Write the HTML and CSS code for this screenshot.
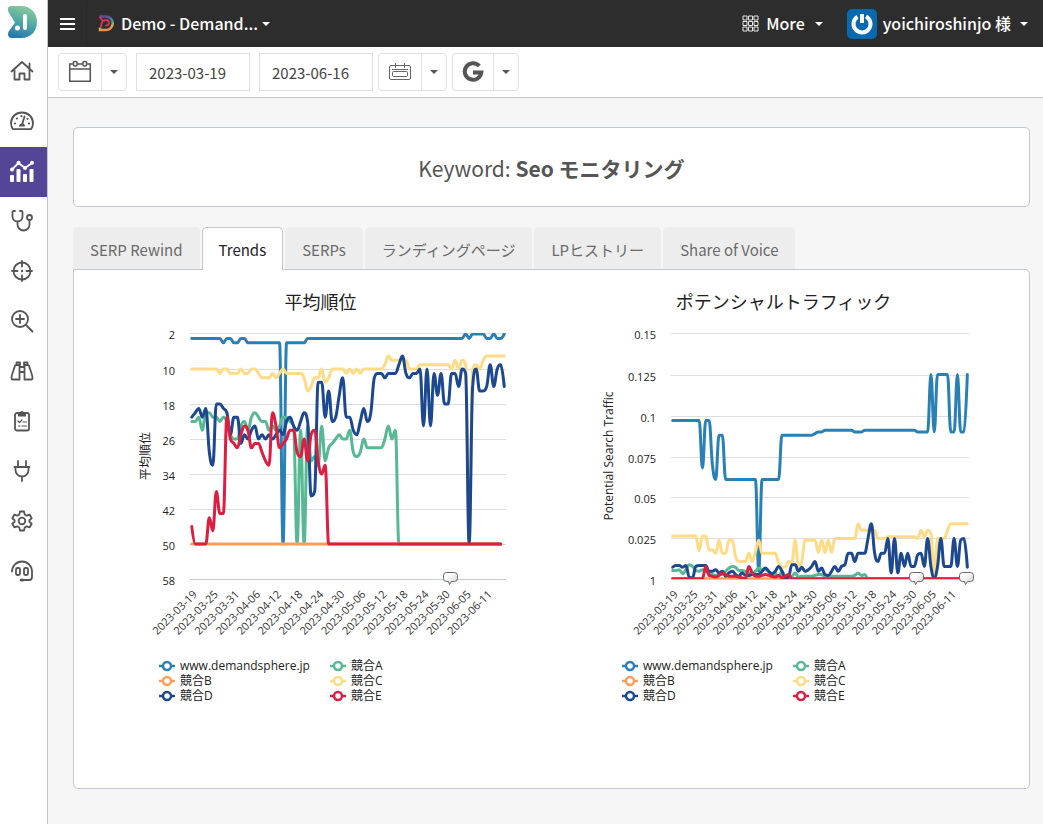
FILE: index.html
```html
<!DOCTYPE html>
<html lang="ja">

<head>
	<title>Keyword: Seo モニタリング</title>
	<meta charset="UTF-8">
	<meta name="viewport" content="width=device-width, initial-scale=1.0">
	<link rel="stylesheet" href="styles.css">
</head>

<body>
	<nav class="sidebar">
		<a href="#" class="side-logo" aria-label="DemandSphere">
			<svg width="30" height="33" viewBox="0 0 30 33">
				<defs>
					<linearGradient id="logo-fill" x1="0.6" y1="0" x2="0.3" y2="1">
						<stop offset="0" stop-color="#8bcb9b" />
						<stop offset="0.5" stop-color="#4fa8a4" />
						<stop offset="1" stop-color="#2577b0" />
					</linearGradient>
				</defs>
				<path fill="url(#logo-fill)" d="M3 0h10c10 0 16 7 16 16s-6 16-16 16H4c-4 0-5-4-3-7l5-7c1-1 1-2 0-3L1 7C-1 3 0 0 3 0z" />
				<rect x="15" y="8" width="4" height="16" rx="2" fill="#fff" />
				<circle cx="9.500" cy="22" r="2.500" fill="#fff" />
			</svg>
		</a>
		<a href="#" class="side-item" aria-label="Home">
			<svg width="24" height="24" viewBox="0 0 24 24"><path d="M1.500 12.500L12 3l10.500 9.500M4.500 11v9.500h5v-6h5v6h5V11M19.500 9V4.500" /></svg>
		</a>
		<a href="#" class="side-item" aria-label="Dashboard">
			<svg width="24" height="24" viewBox="0 0 24 24">
				<path d="M3 20.200C1.800 18.500 1 16.500 1 14.200 1 8 5.900 3.500 12 3.500S23 8 23 14.200c0 2.300-.8 4.300-2 6z" />
				<path d="M12 16l2.500-8.500" />
				<path class="solid" d="M9 17.500a3 3 0 0 1 6 0z" />
				<g class="solid"><circle cx="5" cy="14.500" r="1.100" /><circle cx="7" cy="9.500" r="1.100" /><circle cx="11.500" cy="7.200" r="1.100" /><circle cx="17.500" cy="9.800" r="1.100" /><circle cx="19" cy="14.500" r="1.100" /></g>
			</svg>
		</a>
		<a href="#" class="side-item active" aria-label="Analytics">
			<svg width="26" height="24" viewBox="0 0 26 24">
				<path d="M3 10.500L9.500 4l6.500 5 7-5" />
				<g class="solid"><circle cx="3" cy="10.500" r="2" /><circle cx="9.500" cy="3.800" r="2" /><circle cx="16" cy="9" r="2" /><circle cx="23" cy="3.800" r="2" />
				<rect x="1" y="16" width="4" height="7" rx="1" /><rect x="7.500" y="10" width="4" height="13" rx="1" /><rect x="14" y="15" width="4" height="8" rx="1" /><rect x="20.500" y="10" width="4" height="13" rx="1" /></g>
			</svg>
		</a>
		<a href="#" class="side-item" aria-label="Health check">
			<svg width="24" height="24" viewBox="0 0 24 24"><path d="M5 2H3.500a1 1 0 0 0-1 1v4.500a5 5 0 0 0 10 0V3a1 1 0 0 0-1-1H10M7.500 12.500v3a6 6 0 0 0 12 0V11" /><circle cx="19.500" cy="8.500" r="2.500" /></svg>
		</a>
		<a href="#" class="side-item" aria-label="Target">
			<svg width="24" height="24" viewBox="0 0 24 24"><circle cx="12" cy="12" r="8.500" /><path d="M12 2v5.500M12 16.500V22M2 12h5.500M16.500 12H22" /><circle class="solid" cx="12" cy="12" r="1.200" /></svg>
		</a>
		<a href="#" class="side-item" aria-label="Keyword search">
			<svg width="24" height="24" viewBox="0 0 24 24"><circle cx="10" cy="10" r="8" /><path d="M16 16l6.500 6.500M10 6v8M6 10h8" /></svg>
		</a>
		<a href="#" class="side-item" aria-label="Discover">
			<svg width="24" height="24" viewBox="0 0 24 24"><path d="M6 6H9.500v14.500h-7c-1 0-1-1-1-2C2 14 4 11 5 6.500zM18 6h-3.500v14.500h7c1 0 1-1 1-2-.5-4.500-2.500-7.500-3.500-12zM6.500 6V3.500H10V6M17.500 6V3.500H14V6M9.500 8h5M9.500 13h5" /></svg>
		</a>
		<a href="#" class="side-item" aria-label="Reports">
			<svg width="24" height="24" viewBox="0 0 24 24"><rect x="5" y="4" width="14" height="17.500" rx="2" /><path class="solid" d="M8 7.500V4h2a2 2 0 0 1 4 0h2v3.500z" /><path class="thin" d="M8 12l1.500 1.500L12 11M13 13h3.500M8.500 17h1.500M12 17h4.500" /></svg>
		</a>
		<a href="#" class="side-item" aria-label="Integrations">
			<svg width="24" height="24" viewBox="0 0 24 24"><path d="M8 2v5M16 2v5M4.500 8h15M5.500 8v3a6.500 6.500 0 0 0 13 0V8M12 17.500V22" /></svg>
		</a>
		<a href="#" class="side-item" aria-label="Settings">
			<svg width="24" height="24" viewBox="0 0 24 24"><path d="M10 2.500h4l.7 3 2 1.200 3-1 2 3.500-2.300 2v1.600l2.300 2-2 3.500-3-1-2 1.200-.7 3h-4l-.7-3-2-1.200-3 1-2-3.500 2.300-2v-1.600l-2.300-2 2-3.500 3 1 2-1.200z" /><circle cx="12" cy="12" r="3.300" /></svg>
		</a>
		<a href="#" class="side-item" aria-label="Support">
			<svg width="24" height="24" viewBox="0 0 24 24"><path d="M2 12.500a10 10 0 0 1 20 0V18a3 3 0 0 1-3 3h-7" /><rect x="6" y="9" width="4" height="7" rx="1.500" /><rect x="14" y="9" width="4" height="7" rx="1.500" /><ellipse class="solid" cx="12" cy="21" rx="2.500" ry="1.500" /></svg>
		</a>
	</nav>

	<div class="page">
		<header class="topbar">
			<button type="button" class="menu-btn" aria-label="Menu">
				<svg width="15" height="12" viewBox="0 0 15 12"><path d="M0 1h15M0 6h15M0 11h15" stroke="#fff" stroke-width="2" /></svg>
			</button>
			<button type="button" class="top-btn site-btn">
				<svg width="16" height="17" viewBox="0 0 16 17" fill="none">
					<defs>
						<linearGradient id="site-fill" x1="0.300" y1="0" x2="0.500" y2="1">
							<stop offset="0" stop-color="#5a4a9a" />
							<stop offset="0.450" stop-color="#3f9e9e" />
							<stop offset="0.750" stop-color="#c9b45c" />
							<stop offset="1" stop-color="#f08a4b" />
						</linearGradient>
					</defs>
					<path d="M1.500 1.500H8a6.500 6.500 0 0 1 0 13.500H2l0-2.500" stroke="url(#site-fill)" stroke-width="2.500" />
					<path d="M1.500 1.500l4 5.500M3 12c0-4 2-7 5-7 2 0 3 1.500 3 3 0 2-2 3-3.500 2" stroke="#d9314f" stroke-width="2" />
				</svg>
				<span>Demo - Demand...</span>
				<i class="caret"></i>
			</button>
			<button type="button" class="top-btn more-btn">
				<svg width="17" height="17" viewBox="0 0 17 17" fill="none" stroke="#e8e8e8"><path d="M1 1h4v4H1zM6.500 1h4v4h-4zM12 1h4v4h-4zM1 6.500h4v4H1zM6.500 6.500h4v4h-4zM12 6.500h4v4h-4zM1 12h4v4H1zM6.500 12h4v4h-4zM12 12h4v4h-4z" /></svg>
				<span>More</span>
				<i class="caret"></i>
			</button>
			<button type="button" class="top-btn user-btn">
				<svg width="30" height="30" viewBox="0 0 30 30"><rect width="30" height="30" rx="5" fill="#0769b0" /><path d="M10.500 7.800A8.500 8.500 0 1 0 19 7.500M15 5v9" fill="none" stroke="#fff" stroke-width="4" /></svg>
				<span>yoichiroshinjo 様</span>
				<i class="caret"></i>
			</button>
		</header>

		<div class="toolbar">
			<div class="btn-group">
				<button type="button" class="btn-main" aria-label="Calendar">
					<svg width="24" height="24" viewBox="0 0 24 24" fill="none" stroke="#555" stroke-width="1.500"><path d="M5.500 4H1.700v17.300h20.600V4h-3.800M9 4h6M1.700 9h20.600" /><rect x="5.500" y="1.500" width="3.500" height="4.500" rx="1" /><rect x="15" y="1.500" width="3.500" height="4.500" rx="1" /></svg>
				</button>
				<button type="button" class="btn-caret" aria-label="Period"><i class="caret"></i></button>
			</div>
			<input type="text" class="date-input date-from" aria-label="From" value="2023-03-19">
			<input type="text" class="date-input" aria-label="To" value="2023-06-16">
			<div class="btn-group">
				<button type="button" class="btn-main" aria-label="Compare">
					<svg width="24" height="20" viewBox="0 0 24 20" fill="none" stroke="#666"><rect x="1.500" y="3.500" width="21" height="14" rx="1.500" /><rect x="4.500" y="9.500" width="15" height="5" rx="1" /><path d="M4 7.500h16M7.500 1v5M16.500 1v5" /></svg>
				</button>
				<button type="button" class="btn-caret" aria-label="Compare period"><i class="caret"></i></button>
			</div>
			<div class="btn-group">
				<button type="button" class="btn-main btn-engine" aria-label="Google">
					<svg width="22" height="22" viewBox="0 0 22 22" fill="none" stroke="#555" stroke-width="4"><path d="M17.300 5A8.300 8.300 0 1 0 19.300 11.500H11" /></svg>
				</button>
				<button type="button" class="btn-caret" aria-label="Search engine"><i class="caret"></i></button>
			</div>
		</div>

		<main class="content">
			<h1 class="keyword-box">Keyword: <b>Seo モニタリング</b></h1>

			<nav class="tabs">
				<a href="#" class="tab">SERP Rewind</a>
				<a href="#" class="tab active">Trends</a>
				<a href="#" class="tab">SERPs</a>
				<a href="#" class="tab">ランディングページ</a>
				<a href="#" class="tab">LPヒストリー</a>
				<a href="#" class="tab">Share of Voice</a>
			</nav>

			<div class="panel">
				<section class="chart">
					<h2>平均順位</h2>
					<svg id="rank-chart" class="plot" viewBox="0 0 463 326"></svg>
					<ul class="legend"></ul>
				</section>
				<section class="chart">
					<h2>ポテンシャルトラフィック</h2>
					<svg id="traffic-chart" class="plot" viewBox="0 0 463 326"></svg>
					<ul class="legend"></ul>
				</section>
			</div>
		</main>
	</div>

	<script src="charts.js"></script>
</body>

</html>
```
FILE: styles.css
```css
* {
	box-sizing: border-box;
}

body {
	margin: 0;
	display: flex;
	min-height: 100vh;
	background-color: #f6f6f6;
	color: #555;
	font-family: "Noto Sans CJK JP", "Noto Sans", sans-serif;
	font-size: 16px;
	line-height: 24px;
}

a {
	color: inherit;
	text-decoration: none;
}

button {
	padding: 0;
	border: none;
	background: none;
	color: inherit;
	font: inherit;
	cursor: pointer;
}

svg {
	flex-shrink: 0;
}

.caret {
	border: 4px solid transparent;
	border-top-color: currentColor;
	border-bottom: none;
}

/* Sidebar */
.sidebar {
	flex: none;
	width: 48px;
	background-color: #fff;
	border-right: 1px solid #c3c8d0;
}

.side-logo,
.side-item {
	display: flex;
	align-items: center;
	justify-content: center;
	height: 50px;
}

.side-logo {
	height: 47px;
	padding-right: 2px;
	padding-bottom: 3px;
}

.side-item {
	padding-right: 3px;
	padding-bottom: 2px;
}

.side-item svg {
	fill: none;
	stroke: #555;
	stroke-width: 1.8;
	stroke-linecap: round;
	stroke-linejoin: round;
}

.side-item .solid {
	fill: #555;
	stroke: none;
}

.side-item .thin {
	stroke-width: 1.2;
}

.side-item.active {
	background-color: #554596;
}

.side-item.active svg {
	stroke: #fff;
}

.side-item.active .solid {
	fill: #fff;
}

.page {
	flex: 1;
	min-width: 0;
}

/* Top bar */
.topbar {
	display: flex;
	align-items: center;
	height: 47px;
	padding-right: 15px;
	background-color: #2d2d2d;
	color: #fff;
	font-weight: 500;
}

.menu-btn {
	display: flex;
	align-items: center;
	justify-content: center;
	width: 39px;
	height: 45px;
	border-right: 1px solid #282828;
}

.top-btn {
	display: flex;
	align-items: center;
	gap: 7px;
}

.top-btn span {
	padding-bottom: 2px;
}

.site-btn {
	margin-left: 11px;
}

.site-btn .caret {
	margin-left: -3px;
}

.more-btn {
	margin-left: auto;
}

.more-btn .caret,
.user-btn .caret {
	margin-left: 3px;
}

.user-btn {
	margin-left: 24px;
	gap: 6px;
}

/* Toolbar */
.toolbar {
	display: flex;
	align-items: center;
	gap: 5px;
	height: 51px;
	padding: 0 10px;
	background-color: #fff;
	border-bottom: 1px solid #c4c6ca;
}

.btn-group {
	display: flex;
	height: 38px;
	border: 1px solid #e1e1e1;
	border-radius: 4px;
}

.btn-main,
.btn-caret {
	display: flex;
	align-items: center;
	justify-content: center;
}

.btn-main {
	width: 42px;
}

.btn-engine {
	width: 40px;
}

.btn-caret {
	width: 25px;
	border-left: 1px solid #e1e1e1;
}

.date-input {
	width: 114px;
	height: 38px;
	padding: 0 12px;
	border: 1px solid #e1e1e1;
	background-color: #fff;
	color: #444;
	font-family: inherit;
	font-size: 15px;
}

.date-from {
	margin: 0 4px;
}

/* Content */
.content {
	padding: 29px 13px 35px 25px;
}

.keyword-box {
	margin: 0 0 20px;
	padding: 25px 24px 23px;
	background-color: #fff;
	border: 1px solid #c3c8d0;
	border-radius: 5px;
	font-size: 21px;
	font-weight: 400;
	line-height: 30px;
	text-align: center;
}

.tabs {
	display: flex;
	gap: 2px;
}

.tab {
	height: 42px;
	padding: 11px 17px 0;
	background-color: #ededed;
	border-radius: 5px 5px 0 0;
	color: #6a6a6a;
	font-size: 15px;
}

/* the open tab covers the panel's top border */
.tab.active {
	position: relative;
	z-index: 1;
	height: 43px;
	margin-bottom: -1px;
	padding: 10px 16px 0;
	border: 1px solid #c3c8d0;
	border-bottom: none;
	background-color: #fff;
	color: #222;
}

.panel {
	display: grid;
	grid-template-columns: 1fr 1fr;
	min-height: 520px;
	padding: 18px 14px 0 15px;
	background-color: #fff;
	border: 1px solid #c3c8d0;
	border-radius: 0 5px 5px 5px;
}

/* Charts */
.chart h2 {
	margin: 0 0 6px;
	color: #222;
	font-size: 18px;
	font-weight: 400;
	line-height: 26px;
	text-align: center;
}

.plot {
	display: block;
	width: 100%;
	font-family: "Open Sans", "Noto Sans CJK JP", sans-serif;
	font-size: 11px;
	fill: #222;
}

.plot .grid {
	stroke: #dedede;
}

.plot .axis {
	stroke: #c0cbe0;
}

.plot .date {
	fill: #333;
}

.plot .axis-title {
	font-size: 12px;
}

.plot .line {
	fill: none;
	stroke-width: 3;
	stroke-linecap: round;
	stroke-linejoin: round;
}

.plot .bubble {
	fill: url(#bubble-fill);
	stroke: #666;
}

.legend {
	display: grid;
	grid-template-columns: 171px 100px;
	margin: 12px 0 0;
	padding: 0 0 0 70px;
	list-style: none;
	color: #222;
	font-family: "Open Sans", "Noto Sans CJK JP", sans-serif;
	font-size: 12px;
	line-height: 15px;
}

.legend li {
	display: flex;
	align-items: center;
	gap: 5px;
	height: 15px;
}

.legend svg {
	fill: #fff;
	stroke-width: 2.5;
}
```
FILE: charts.js
```js
const series = [
	{ name: "www.demandsphere.jp", color: "#2980b5" },
	{ name: "競合A", color: "#57b894" },
	{ name: "競合B", color: "#fd9e5b" },
	{ name: "競合C", color: "#fedb85" },
	{ name: "競合D", color: "#1c4890" },
	{ name: "競合E", color: "#dc1e41" }
];

// values are "value" or "value*days", one per day from 2023-03-19
const rank = [
	"3*9 4 3*2 4*2 3*2 4*10 50 4*6 3*45 2 3 2*4 3*2 2 3*2 2",
	"22*2 21 24 20*2 21*2 22 21 22 25 26*2 23 22 24 21 20 21 22*2 24 23 24 23 21*2 22 23 50 24 50 23 31 30 32 23 31 28 27 26 25 26*2 24 29 30 29 26 28*5 26 23 26 24 50*30",
	"50*89",
	"10*8 11 10*2 11*3 10 11*2 10*2 11 12*3 11 12 11 10 11*5 12 15 14 12*2 10 13 12 10*4 11 10 11 10 11 10*6 9 7 8*5 10*3 9*9 10 8 10 8 9 50 10 9 10 8 7*6",
	"21 20 19 21 19 29 32 18*2 19 20 25 21*2 27 25 26 24 23 26 25 26 25 26 25 24 25 22 21 23 24 22 20 22 39 38 13*2 21 15 22 21 16 12 21*2 24 25 22 19 22 20 12 11*2 12 11*3 9 7 11 12 11*2 10 23 10 23 11 16 11 18*2 11*2 14 10 11 50 14 10 15*2 14 9 14 10 9 14",
	"46 50*4 44 47 38 43*2 21 26 27 28 25 23 24 28 27*2 29 31 32 20 23 28 27 26 24*2 29 30 26 31 25 24 31 34 32 50*50"
];

// thousandths
const traffic = [
	"97*9 68 97*2 70 61 88*2 61*10 5 61*6 88*10 89 90*2 91*9 90*3 91*16 90*4 125 90 125*4 90*2 125 90*2 125",
	"5.5*2 6 3.5 6 9 8 5.5 5 6 5 4 3 2.5 3*2 5 7 8 7.5 5.5*2 5 4*2 5 7 6*2 5 0.5 4 0.5 5 2*3 4 1.5 2*4 2.5 3*2 1.5 2*8 2.5 4 2.5 3 0.5*30",
	"0.5*89",
	"26.5*8 17.5 26.5*2 18*2 16 24 16*2 24*2 14 11*3 16 11 17 24 16*5 10 7.5*2 11 10 24 8 11 24*4 16.5 24 16.5 24 16.5 25*7 34 30*5 25*3 26*9 25 30 26 30 28 2 25*3 30 34*6",
	"7.5 8.5*2 7.5 8.5 1.5 1 8 8.5*3 5*2 6 4 5 2 4 5 3 2 4 2.5*2 3*3 5 7 5 3.5 5 8 5 1 1.5 9*2 5 7.5 5 6 8 11 5 7 3 2.5 5 8 5 8 9 16*2 11 16*3 25 34 16 11 16*2 25 4 25 4 16 8 16 8*2 15 16 8 25 8 1 8 25 8*3 25 8 24 25 7.5",
	"0.5*10 8 2.5 2 1.5 2.5 4 3 2*3 1.5 1 0.5 8 4 2*2 2.5 3 2.5 2 1.5 2.5 1 2 3 0.5*54"
];

function parseValues(text) {
	let values = [];
	text.split(" ").forEach(part => {
		let [value, days] = part.split("*");
		for (let i = 0; i < (days || 1); i++) {
			values.push(Number(value));
		}
	});
	return values;
}

// smooth line that never overshoots its own points
function spline(points) {
	let path = `M${points[0].x} ${points[0].y}`;
	let handle = points[0];

	for (let i = 1; i < points.length; i++) {
		let last = points[i - 1];
		let point = points[i];
		let next = points[i + 1];
		let left = point;
		let right = point;

		if (next) {
			left = { x: (1.5 * point.x + last.x) / 2.5, y: (1.5 * point.y + last.y) / 2.5 };
			right = { x: (1.5 * point.x + next.x) / 2.5, y: (1.5 * point.y + next.y) / 2.5 };
			let shift = (right.y - left.y) * (right.x - point.x) / (right.x - left.x) + point.y - right.y;
			left.y += shift;
			right.y += shift;

			let clamped = Math.max(Math.min(last.y, point.y), Math.min(Math.max(last.y, point.y), left.y));
			if (clamped !== left.y) {
				left.y = clamped;
				right.y = 2 * point.y - left.y;
			}
			clamped = Math.max(Math.min(next.y, point.y), Math.min(Math.max(next.y, point.y), right.y));
			if (clamped !== right.y) {
				right.y = clamped;
				left.y = 2 * point.y - right.y;
			}
		}

		path += ` C${[handle.x, handle.y, left.x, left.y, point.x, point.y].map(n => n.toFixed(2)).join(" ")}`;
		handle = right;
	}
	return path;
}

function drawChart(id, options) {
	const top = 13;
	const bottom = 259;
	let { left, right } = options;
	let step = (right - left) / 90;
	let html = `<defs>
		<clipPath id="${id}-clip"><rect x="${left}" y="${top}" width="${right - left}" height="${bottom - top}"/></clipPath>
		<linearGradient id="bubble-fill" x1="0" y1="0" x2="1" y2="1"><stop offset="0.3" stop-color="#fff"/><stop offset="1" stop-color="#ccc"/></linearGradient>
	</defs>`;

	options.labels.forEach((label, i) => {
		let y = options.rows[i] + 0.5;
		let type = i === options.labels.length - 1 ? "axis" : "grid";
		html += `<path class="${type}" d="M${left} ${y}H${right}"/>`;
		html += `<text x="${left - 15}" y="${y + 5}" text-anchor="end">${label}</text>`;
	});

	for (let day = 0; day < 90; day += 6) {
		let date = new Date(Date.UTC(2023, 2, 19 + day)).toISOString().slice(0, 10);
		let x = left + step * (day + 0.5) + 6;
		html += `<text class="date" text-anchor="end" transform="translate(${x.toFixed(1)} 275) rotate(-45)">${date}</text>`;
	}

	html += `<text class="axis-title" text-anchor="middle" transform="translate(${options.titleX} 136) rotate(-90)">${options.title}</text>`;

	html += `<g clip-path="url(#${id}-clip)">`;
	options.data.forEach((text, i) => {
		let points = parseValues(text).map((value, day) => ({ x: left + step * (day + 0.5), y: options.scale(value) }));
		html += `<path class="line" stroke="${series[i].color}" d="${spline(points)}"/>`;
	});
	html += `</g>`;

	options.notes.forEach(x => {
		html += `<path class="bubble" d="M${x - 4} 252.500h8q3 0 3 3v3q0 3-3 3h-3l-2 3-1-3h-2q-3 0-3-3v-3q0-3 3-3z"/>`;
	});

	let svg = document.getElementById(id);
	svg.innerHTML = html;
	svg.parentNode.querySelector(".legend").innerHTML = series.map(item => `<li>
		<svg width="16" height="12" viewBox="0 0 16 12" stroke="${item.color}"><path d="M0 6h16"/><circle cx="8" cy="6" r="4"/></svg>
		<span>${item.name}</span>
	</li>`).join("");
}

drawChart("rank-chart", {
	left: 101,
	right: 417,
	title: "平均順位",
	titleX: 61,
	labels: ["2", "10", "18", "26", "34", "42", "50", "58"],
	rows: [13, 49, 84, 119, 154, 189, 224, 259],
	scale: value => 14 + (value - 2) * 4.375,
	data: rank,
	notes: [361.5]
});

drawChart("traffic-chart", {
	left: 119,
	right: 417,
	title: "Potential Search Traffic",
	titleX: 61,
	labels: ["0.15", "0.125", "0.1", "0.075", "0.05", "0.025", "1"],
	rows: [13, 55, 96, 137, 177, 218, 259],
	scale: value => 259.5 - value * 1.64,
	data: traffic,
	notes: [364.5, 414.5]
});
```
